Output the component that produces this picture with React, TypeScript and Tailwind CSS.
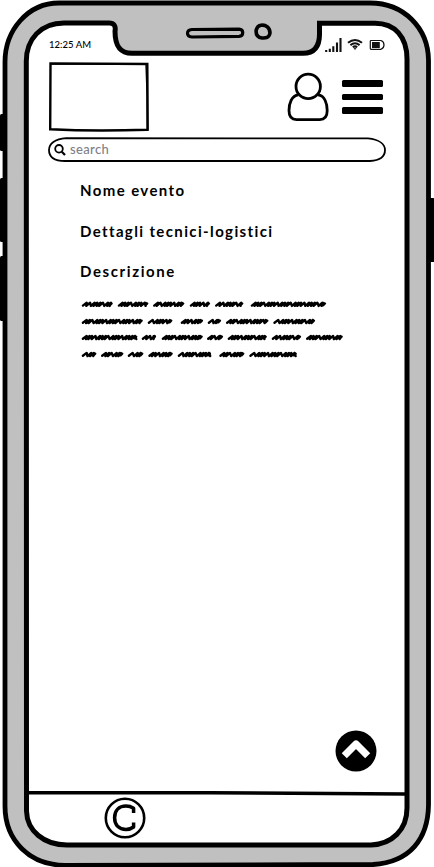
import React from "react";

type Word = [start: number, end: number];

const scribbleRows: { y: number; words: Word[] }[] = [
  { y: 14.3, words: [[1.7, 32.7], [37.7, 68.3], [73, 104.3], [109.7, 130], [135, 163.3], [170.7, 246]] },
  { y: 31.5, words: [[1.7, 62.7], [67.7, 92.3], [100.7, 123], [127.7, 141], [146, 188.3], [193.3, 235]] },
  { y: 47.5, words: [[1.7, 57.3], [61.7, 76], [81.7, 122.7], [127, 143], [147.7, 186.7], [191.7, 221], [226, 262.7]] },
  { y: 64.5, words: [[1.7, 16.3], [21, 43.3], [47.7, 63.3], [68.3, 92.7], [97.7, 131], [139.3, 164.3], [169.3, 216.7]] },
];

const steps = [3.4, 4.6, 2.6, 3.2, 2.5, 5, 3, 2.4];

/* A word is one pen line that keeps rising to the right and dropping back. */
function scribble([start, end]: Word, y: number, seed: number) {
  let x = start + 1.2;
  let d = `M${x} ${y + 1.3}`;
  let i = seed;
  while (x + 5 < end) {
    const step = steps[i % steps.length];
    d += `L${x + 3.8} ${y - 1.6}L${x + step} ${y + 1.6}`;
    x += step;
    i += 1;
  }
  return `${d}L${end - 2.4} ${y - 1.4}L${end - 2.8} ${y + 0.9}L${end - 1.1} ${y - 0.8}`;
}

function Frame() {
  return (
    <svg className="absolute inset-0" width="434" height="867" viewBox="0 0 434 867" fill="none" stroke="#000" aria-hidden="true">
      <g fill="#000" stroke="none">
        <rect x="0" y="114" width="6" height="37" rx="1.5" />
        <rect x="0" y="178" width="6" height="64" rx="1.5" />
        <rect x="0" y="256" width="6" height="65" rx="1.5" />
        <rect x="426" y="198" width="9" height="64" rx="2" />
      </g>
      <path d="M5 62C5 30 28 3 59 3L370 3C404 3 428 28 428.5 60L428.5 805C428 839 410 862 373 864.5L65 865.3C30 865 5 841 5 806Z" fill="#c0c0c0" strokeWidth="4.8" />
      <path d="M26.3 62C26 39 41 23 64 23L109 23C114 23 116 26 115 31C115 46 120 53.3 132 53.3L303 53.3C315 53.3 319.5 46 319.5 34L319.5 23.3L375 23.3C395 23.3 407 37 407 59L407 808C407 830 392 844 371 845L67 845C44 845 27 831 26.5 811Z" fill="#fff" strokeWidth="5" />
      <path d="M192 29.5L239 29.2C244 29.5 244 36 239 36.3L192 37C186 36.5 186 30 192 29.5Z" strokeWidth="3.2" />
      <path d="M261 25.2C266 24.5 270 28 270 33C269 38 266 38.2 262 38C257 37.5 255.8 34 256.2 30C257 27 258.5 25.5 261 25.2Z" strokeWidth="3.6" />
    </svg>
  );
}

function StatusIcons() {
  return (
    <svg width="62" height="16" viewBox="324 37 62 16" fill="none" stroke="#111" aria-hidden="true">
      <path d="M326.2 50V52M329.8 48.8V52M333.3 46.2V52M337 42.6V52M340.5 38V52" strokeWidth="2.1" />
      <path d="M348 42.7Q355 37.2 362 42.7M350.4 45.1Q355 41.5 359.6 45.1M352.8 47.3Q355 45.5 357.2 47.3" strokeWidth="2" />
      <path d="M354 48.4L355 49.5L356 48.4Z" fill="#111" strokeWidth=".7" />
      <path d="M371 40.5H381Q384 41.5 384 45Q384 48 381 49.3H371Q370.3 49.3 370.3 48.5V41.3Q370.3 40.5 371 40.5Z" strokeWidth="1.2" />
      <rect x="372" y="42" width="7.8" height="6" fill="#111" stroke="none" />
    </svg>
  );
}

export default function App() {
  return (
    <div className="relative h-[867px] w-[434px] overflow-hidden bg-white font-['Lato','Liberation_Sans',sans-serif] text-black">
      <Frame />
      <div className="relative flex h-full flex-col pl-[29px] pr-[29px] pt-[37px]">
        <div className="flex h-4 items-center justify-between pl-[20px] pr-[19px]">
          <span className="whitespace-nowrap text-[9.5px] font-medium leading-4 tracking-[0.05px]">12:25 AM</span>
          <StatusIcons />
        </div>

        <header className="flex h-[84px] pl-5 pt-[9px]">
          <svg width="101" height="70" viewBox="49 62 101 70" fill="none" stroke="#000" strokeWidth="2.4" aria-hidden="true">
            <path d="M50.5 63.4L147.3 64L147.7 129.7Q95 131.5 50.2 129.3Z" />
            <path d="M50 64L146 64.2L147.1 95L147.3 130" strokeWidth="1.4" />
          </svg>
          <svg className="ml-[136px] mt-[9px]" width="44" height="52" viewBox="286 71 44 52" fill="none" stroke="#000" strokeWidth="2.8" aria-hidden="true">
            <circle cx="308.2" cy="86.4" r="12.2" />
            <path d="M298.4 94.9C291.5 95.5 289 104 289 110.5C289 116.5 292 119.6 296.5 119.6H319.8C324.3 119.6 327.2 116.5 327.2 110.5C327.2 104 324.9 95.5 318 94.9" />
          </svg>
          <div className="ml-[12px] mt-[18px] flex flex-col gap-[6.8px]">
            <div className="h-[6.8px] w-[41px] rounded-[1.5px] bg-black" />
            <div className="h-[6.8px] w-[41px] rounded-[1.5px] bg-black" />
            <div className="h-[6.8px] w-[41px] rounded-[1.5px] bg-black" />
          </div>
        </header>

        <div className="relative ml-[19px] flex h-[25px] w-[338px] items-center">
          <svg className="absolute inset-0" width="338" height="25" viewBox="48 137 338 25" fill="none" stroke="#000" strokeWidth="1.8" aria-hidden="true">
            <path d="M66 138.2L368 138.4C379 139.5 385 144 385 150C385 157 379 160.5 370 161L65 161C54 161 49 156.5 49 150C49 144 55 138.8 66 138.2Z" />
          </svg>
          <svg className="relative ml-[6px]" width="12" height="13" viewBox="54 143 12 13" fill="none" stroke="#000" aria-hidden="true">
            <circle cx="59" cy="148.8" r="3.8" strokeWidth="1.8" />
            <path d="M61.8 151.7L65 155" strokeWidth="2.2" />
          </svg>
          <span className="relative -mt-[2px] ml-1 text-[13px] font-medium leading-4 tracking-[0.35px] text-[#808088]">search</span>
        </div>

        <main className="flex flex-1 flex-col pl-[51px] pt-[16.5px]">
          <h1 className="h-[41px] whitespace-nowrap text-[15px] font-bold leading-[22px] tracking-[1.4px]">Nome evento</h1>
          <h2 className="h-10 whitespace-nowrap text-[15px] font-bold leading-[22px] tracking-[1.37px]">Dettagli tecnici-logistici</h2>
          <h2 className="h-[31px] whitespace-nowrap text-[15px] font-bold leading-[22px] tracking-[1.6px]">Descrizione</h2>
          <svg className="mt-[-.5px] shrink-0" width="266" height="74" viewBox="0 0 266 74" fill="none" stroke="#000" strokeWidth="2.4" strokeLinecap="round" strokeLinejoin="round" aria-hidden="true">
            {scribbleRows.map((row, r) =>
              row.words.map((word, w) => <path key={`${r}-${w}`} d={scribble(word, row.y, r * 3 + w * 2)} />),
            )}
          </svg>
          <svg className="mb-[18px] mr-[28px] mt-auto self-end" width="42" height="42" viewBox="335 729.5 42 42" aria-hidden="true">
            <circle cx="356" cy="750.5" r="20.5" />
            <path d="M344.3 755.2L356 743.5L367.7 755.2" fill="none" stroke="#fff" strokeWidth="7.2" strokeLinejoin="round" />
          </svg>
        </main>

        <footer className="flex h-[77px] flex-col">
          <svg className="shrink-0" width="376" height="6" viewBox="29 789 376 6" fill="none" stroke="#000" strokeWidth="3.5" aria-hidden="true">
            <path d="M29 791.8L210 791.8L405 793" />
          </svg>
          <svg className="ml-[75px] mt-[1px] shrink-0" width="42" height="42" viewBox="104 797 42 42" fill="none" stroke="#000" aria-hidden="true">
            <circle cx="125" cy="818" r="19.2" strokeWidth="2.6" />
            <path d="M133.6 813V808.2C131.3 806.8 128.8 806.1 126 806.1C119 806.1 114.6 810.6 114.6 817.8C114.6 825 119 829.4 126 829.4C129 829.4 131.6 828.5 133.6 827V822.5" strokeWidth="3.5" strokeLinejoin="round" />
          </svg>
        </footer>
      </div>
    </div>
  );
}
